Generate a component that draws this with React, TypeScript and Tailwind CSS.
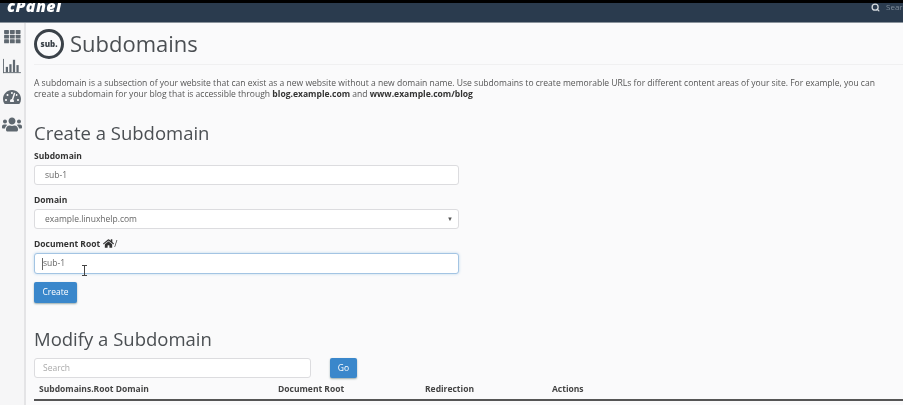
import { Search } from "lucide-react"
import { FaHome, FaTachometerAlt, FaUsers } from "react-icons/fa"

function SideIcons() {
  return (
    <aside className="flex w-[26px] shrink-0 flex-col items-center gap-[10px] border-r-2 border-[#e4e4e6] bg-[#f6f6f7] pt-[7px] text-[#5f6870]">
      <svg width="17" height="14" viewBox="0 0 18 15" fill="currentColor">
        {[0, 5, 10].map((y) =>
          [0, 6.2, 12.4].map((x) => <rect key={`${x}-${y}`} x={x} y={y} width="5.2" height="4.2" rx="0.6" />)
        )}
      </svg>
      <svg width="20" height="16" viewBox="0 0 20 18" fill="currentColor" className="mt-[4px]">
        <rect x="0" y="1" width="1" height="16" />
        <rect x="0" y="16" width="20" height="1" />
        <rect x="3" y="10" width="2.5" height="6" />
        <rect x="7" y="7" width="2.5" height="9" />
        <rect x="11" y="2" width="2.5" height="14" />
        <rect x="15" y="8" width="2.5" height="8" />
      </svg>
      <FaTachometerAlt className="mt-[5px] h-[16px] w-[18px]" />
      <FaUsers className="h-[19px] w-[20px]" />
    </aside>
  )
}

function Field({ label, value }: { label: string; value: string }) {
  return (
    <div className="mb-[8px]">
      <div className="mb-[3px] h-[13px] text-[8.5px] leading-[13px] font-bold text-[#333]">{label}</div>
      <div className="flex h-[20px] w-[425px] items-center rounded-[3px] border border-[#dcdcdf] bg-white pl-[10px] text-[8.5px] text-[#666]">
        {value}
      </div>
    </div>
  )
}

export default function App() {
  return (
    <div className="flex h-[405px] w-[903px] flex-col overflow-hidden bg-[#fafafb] font-['Open_Sans',sans-serif] text-[#444] blur-[0.4px]">
      <header className="flex h-[23px] shrink-0 items-center justify-between overflow-hidden border-t-[3px] border-b border-t-black border-b-[#8a939c] bg-[#2a3b4e] pl-[7px] text-white">
        <span className="-mt-[13px] text-[16px] leading-none font-extrabold tracking-[0.4px] italic">cPanel</span>
        <div className="-mt-[11px] flex items-center gap-[6px] text-[#7f8c99]">
          <Search className="h-[9px] w-[9px] text-[#d5dade]" strokeWidth={3.5} />
          <span className="w-[17px] overflow-hidden text-[8px]">Search</span>
        </div>
      </header>
      <div className="flex min-h-0 flex-1">
        <SideIcons />
        <main className="relative min-w-0 flex-1 pt-[6px] pl-[8px]">
          <div className="flex items-center gap-[6px] border-b border-[#f0f0f1] pb-[5px]">
            <div className="flex h-[30px] w-[30px] items-center justify-center rounded-full border-[3px] border-[#3b4249] text-[8px] font-extrabold text-[#3b4249]">
              sub.
            </div>
            <h1 className="-mt-[2px] text-[22px] leading-[30px] text-[#4b4f53]">Subdomains</h1>
          </div>
          <p className="mt-[13px] w-[848px] text-[8.55px] leading-[11px] text-[#555]">
            A subdomain is a subsection of your website that can exist as a new website without a new domain name. Use subdomains to create memorable URLs for different content areas of your site. For example, you can create a subdomain for your blog that is accessible through{" "}
            <b className="text-[#333]">blog.example.com</b> and <b className="text-[#333]">www.example.com/blog</b>
          </p>
          <h2 className="mt-[20px] mb-[3px] text-[18.5px] leading-[26px] text-[#4b4f53]">Create a Subdomain</h2>
          <Field label="Subdomain" value="sub-1" />
          <div className="mb-[8px]">
            <div className="mb-[3px] h-[13px] text-[8.5px] leading-[13px] font-bold text-[#333]">Domain</div>
            <div className="flex h-[20px] w-[425px] items-center justify-between rounded-[3px] border border-[#dcdcdf] bg-white pr-[5px] pl-[10px] text-[8.5px] text-[#666]">
              example.linuxhelp.com
              <span className="text-[6px] text-[#555]">▼</span>
            </div>
          </div>
          <div className="mb-[3px] flex h-[13px] items-center text-[8.5px] leading-[13px] font-bold text-[#333]">
            Document Root
            <FaHome className="ml-[3px] h-[11px] w-[11px]" />
            <span className="font-normal">/</span>
          </div>
          <div className="flex h-[21px] w-[425px] items-center rounded-[3px] border border-[#a3c4e3] bg-white pl-[7px] text-[8.5px] text-[#666] shadow-[0_0_3px_#bcd6ec]">
            <span className="h-[12px] w-px bg-[#666]" />
            sub-1
          </div>
          <button className="mt-[8px] h-[21px] w-[43px] rounded-[2px] bg-[#3a87cb] text-[8.5px] text-white shadow-[0_1px_2px_#9aa]">Create</button>
          <h2 className="mt-[23px] mb-[6px] text-[18.5px] leading-[26px] text-[#4b4f53]">Modify a Subdomain</h2>
          <div className="flex gap-[19px]">
            <div className="flex h-[20px] w-[277px] items-center rounded-[3px] border border-[#dcdcdf] bg-white pl-[8px] text-[8.5px] text-[#aaa]">Search</div>
            <button className="h-[20px] w-[27px] rounded-[2px] bg-[#3a87cb] text-[8.5px] text-white shadow-[0_1px_2px_#9aa]">Go</button>
          </div>
          <div className="mt-[2px] flex h-[21px] items-center border-b-2 border-[#555] pl-[5px] text-[8.5px] font-bold text-[#444]">
            <span className="w-[239px]">Subdomains.Root Domain</span>
            <span className="w-[147px]">Document Root</span>
            <span className="w-[127px]">Redirection</span>
            <span>Actions</span>
          </div>
          {/* mouse cursor over the field */}
          <svg className="absolute top-[242px] left-[55px]" width="7" height="11" viewBox="0 0 7 11" fill="none" stroke="#444" strokeWidth="1">
            <path d="M1 .5h5M3.5.5v10M1 10.5h5" />
          </svg>
        </main>
      </div>
    </div>
  )
}
